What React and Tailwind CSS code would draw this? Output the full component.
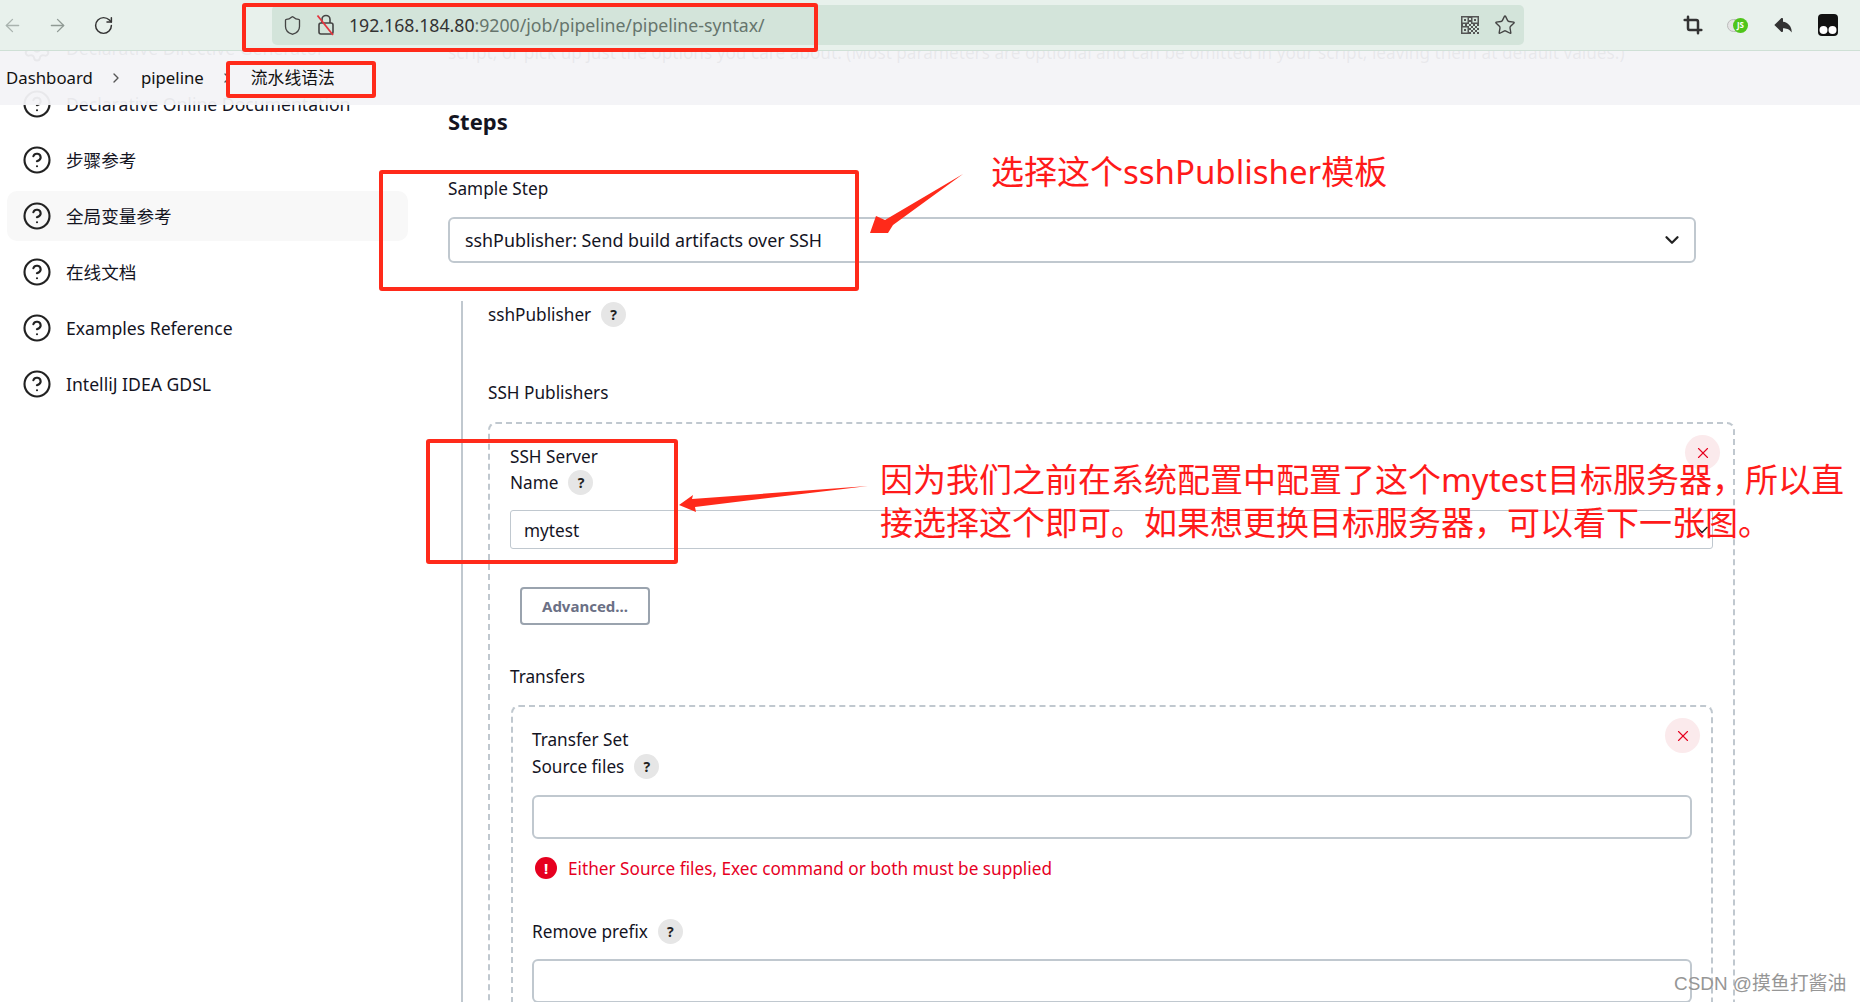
import React from 'react';
import { ArrowLeft, ArrowRight, RotateCw, Shield, Star, Crop, CircleHelp, Settings, ChevronDown, ChevronRight, X } from 'lucide-react';
import { TiArrowBack } from 'react-icons/ti';

const sideItems = [
  { label: 'Declarative Directive Generator', gear: true },
  { label: 'Declarative Online Documentation' },
  { label: '步骤参考' },
  { label: '全局变量参考', active: true },
  { label: '在线文档' },
  { label: 'Examples Reference' },
  { label: 'IntelliJ IDEA GDSL' },
];

// checker cells of the qr icon, on a 9x9 grid
const qrCells = [
  [4, 0], [4, 2], [0, 4], [2, 4], [4, 4], [6, 4], [8, 4], [5, 5], [7, 5], [4, 6], [6, 6], [8, 6], [5, 7], [7, 7], [4, 8], [6, 8], [8, 8],
];

function QrIcon() {
  return (
    <svg width="18" height="18" viewBox="0 0 18 18" className="ml-auto text-[#555]" fill="currentColor">
      <path fillRule="evenodd" d="M0 0h8v8H0zM1.5 1.5v5h5v-5zM10 0h8v8h-8zM11.5 1.5v5h5v-5zM0 10h8v8H0zM1.5 11.5v5h5v-5z" />
      <rect x="3" y="3" width="2" height="2" />
      <rect x="13" y="3" width="2" height="2" />
      <rect x="3" y="13" width="2" height="2" />
      {qrCells.map(([x, y]) => (
        <rect key={`${x}-${y}`} x={x * 2} y={y * 2} width="2" height="2" />
      ))}
    </svg>
  );
}

function Help() {
  return (
    <span className="ml-[10px] inline-flex h-[25px] w-[25px] items-center justify-center rounded-full bg-[#e6e6e6] text-[14px] font-bold text-[#222]">?</span>
  );
}

function Label({ children, help, className = '' }) {
  return (
    <div className={`flex h-[26px] items-center ${className}`}>
      <span className="pt-[2px]">{children}</span>
      {help && <Help />}
    </div>
  );
}

function Toolbar() {
  return (
    <div className="flex h-[51px] items-center border-b border-[#cfe0d6] bg-[#e8f1ec] text-[#444]">
      <ArrowLeft size={21} strokeWidth={1.5} className="ml-[2px] text-[#a9b3ae]" />
      <ArrowRight size={21} strokeWidth={1.5} className="ml-[24px] text-[#8f9a94]" />
      <RotateCw size={21} strokeWidth={1.7} className="ml-[25px] text-[#333]" />
      <div className="ml-[158px] flex h-[40px] w-[1252px] items-center rounded-[5px] bg-[#d3e4da]">
        <Shield size={21} strokeWidth={1.5} className="ml-[10px]" />
        <svg width="20" height="24" viewBox="0 0 20 24" className="ml-[13px]" fill="none">
          <path d="M6 10V6.5a4 4 0 0 1 8 0V10" stroke="#444" strokeWidth="1.6" />
          <rect x="3" y="10" width="14" height="11" rx="2" stroke="#444" strokeWidth="1.6" />
          <path d="M1.5 2.5 17 22" stroke="#e5343f" strokeWidth="1.8" />
        </svg>
        <span className="ml-[13px] text-[17.7px] text-[#66756d]">
          <span className="text-[#333]">192.168.184.80</span>:9200/job/pipeline/pipeline-syntax/
        </span>
        <QrIcon />
        <Star size={22} strokeWidth={1.5} className="ml-[15px] mr-[8px]" />
      </div>
      <Crop size={20} strokeWidth={3} className="ml-[159px] text-[#333]" />
      <div className="relative ml-[24px] h-[13px] w-[20px] rounded-full border border-[#bbb] bg-[#e4e4e4]">
        <span className="absolute -right-[2px] -top-[2px] flex h-[15px] w-[15px] items-center justify-center rounded-full bg-[#4fc51a] text-[8px] font-bold text-white">JS</span>
      </div>
      <TiArrowBack size={26} className="ml-[23px] text-[#333]" />
      <svg width="20" height="22" viewBox="0 0 20 22" className="ml-[22px]">
        <rect width="20" height="22" rx="4" fill="#111" />
        <circle cx="5.5" cy="16" r="4" fill="#fff" />
        <circle cx="14.5" cy="16" r="4" fill="#fff" />
      </svg>
    </div>
  );
}

function Breadcrumb() {
  return (
    <div className="flex h-[54px] items-center bg-[#f3f3f7]/95 pl-[6px] text-[16.8px] text-[#111]">
      <span>Dashboard</span>
      <ChevronRight size={16} className="ml-[15px] text-[#555]" />
      <span className="ml-[17px]">pipeline</span>
      <ChevronRight size={16} className="ml-[15px] text-[#555]" />
      <span className="ml-[16px]">流水线语法</span>
    </div>
  );
}

function Sidebar() {
  return (
    <aside className="flex w-[448px] shrink-0 flex-col gap-[6px] pt-[23px] text-[17.6px]">
      {sideItems.map((item) => (
        <div
          key={item.label}
          className={`ml-[7px] flex h-[50px] w-[401px] items-center gap-[14px] rounded-[10px] pl-[15px] ${item.active ? 'bg-[#f8f8f8]' : ''}`}
        >
          {item.gear ? <Settings size={30} strokeWidth={1.6} className="text-[#222]" /> : <CircleHelp size={30} strokeWidth={1.7} className="text-[#222]" />}
          <span>{item.label}</span>
        </div>
      ))}
    </aside>
  );
}

function StepForm() {
  return (
    <div className="ml-[13px] mt-[38px] border-l-2 border-[#c0c8cf] pl-[25px]">
      <Label help>sshPublisher</Label>
      <Label className="mt-[52px]">SSH Publishers</Label>

      <div className="relative mt-[17px] rounded-[8px] border-2 border-dashed border-[#c0c8cf] px-[20px] pt-[19px]">
        <button className="absolute right-[13px] top-[11px] flex h-[35px] w-[35px] items-center justify-center rounded-full bg-[#fbeaec] text-[#e6001f]">
          <X size={18} strokeWidth={1.5} />
        </button>
        <Label>SSH Server</Label>
        <Label help>Name</Label>
        <div className="mt-[15px] flex h-[39px] items-center justify-between rounded-[3px] border border-[#c0c8cf] pl-[13px]">
          <span className="pt-[2px]">mytest</span>
          <ChevronDown size={20} className="text-[#222]" />
        </div>
        <button className="ml-[10px] mt-[38px] block h-[38px] w-[130px] rounded-[4px] border-2 border-[#9aa3ae] text-[15px] font-bold text-[#6b7085]">Advanced...</button>
        <Label className="mt-[38px]">Transfers</Label>

        <div className="relative ml-px mt-[16px] rounded-[8px] border-2 border-dashed border-[#c0c8cf] px-[19px] pt-[19px] pb-[40px]">
          <button className="absolute right-[11px] top-[11px] flex h-[35px] w-[35px] items-center justify-center rounded-full bg-[#fbeaec] text-[#e6001f]">
            <X size={18} strokeWidth={1.5} />
          </button>
          <Label>Transfer Set</Label>
          <Label help className="mt-px">Source files</Label>
          <div className="mt-[16px] h-[44px] rounded-[6px] border-2 border-[#c0c8cf]" />
          <div className="mt-[16px] flex h-[26px] items-center text-[#e6001f]">
            <span className="ml-[3px] flex h-[22px] w-[22px] items-center justify-center rounded-full bg-[#e6001f] text-[15px] font-bold text-white">!</span>
            <span className="ml-[11px] pt-[2px]">Either Source files, Exec command or both must be supplied</span>
          </div>
          <Label help className="mt-[37px]">Remove prefix</Label>
          <div className="mt-[15px] h-[44px] rounded-[6px] border-2 border-[#c0c8cf]" />
        </div>
      </div>
    </div>
  );
}

function Annotations() {
  return (
    <>
      {/* red boxes drawn over the screenshot */}
      <div className="absolute left-[242px] top-[3px] h-[49px] w-[576px] rounded-[3px] border-4 border-[#ff2a1a]" />
      <div className="absolute left-[226px] top-[61px] h-[37px] w-[150px] rounded-[3px] border-4 border-[#ff2a1a]" />
      <div className="absolute left-[379px] top-[170px] h-[121px] w-[480px] rounded-[3px] border-4 border-[#ff2a1a]" />
      <div className="absolute left-[426px] top-[439px] h-[125px] w-[252px] rounded-[3px] border-4 border-[#ff2a1a]" />

      <svg className="absolute left-0 top-0" width="1860" height="1002" fill="#ff2a1a">
        <polygon points="870,233 876,216 885,220 963,174 893,225 888,233" />
        <polygon points="679,505 693,495 692,499 868,486 695,507 696,512" />
      </svg>

      <div className="absolute left-[991px] top-[148px] text-[33px] leading-[48px] whitespace-nowrap text-[#ff1a1a]">选择这个sshPublisher模板</div>
      <div className="absolute left-[880px] top-[458px] text-[33px] leading-[43px] whitespace-nowrap text-[#ff1a1a]">
        <div>因为我们之前在系统配置中配置了这个mytest目标服务器，所以直</div>
        <div>接选择这个即可。如果想更换目标服务器，可以看下一张图。</div>
      </div>
      <div className="absolute left-[1674px] top-[970px] font-['Liberation_Sans','Noto_Sans_CJK_SC',sans-serif] text-[18.9px] leading-[28px] whitespace-nowrap text-[#969696]">CSDN @摸鱼打酱油</div>
    </>
  );
}

export default function App() {
  return (
    <div className="relative h-screen w-full overflow-hidden bg-white font-['Noto_Sans','Noto_Sans_CJK_SC',sans-serif] text-[17.2px] text-[#14141f]">
      <div className="flex">
        <Sidebar />
        <main className="min-w-0 flex-1 pr-[125px] pt-[40px]">
          <p className="h-[26px] whitespace-nowrap leading-[26px]">script, or pick up just the options you care about. (Most parameters are optional and can be omitted in your script, leaving them at default values.)</p>
          <h2 className="mt-[41px] text-[22px] font-bold leading-[28px]">Steps</h2>
          <Label className="mt-[40px]">Sample Step</Label>
          <div className="mt-[16px] flex h-[46px] w-[1248px] items-center justify-between rounded-[6px] border-2 border-[#c0c8cf] pl-[15px] pr-[11px] text-[17.85px]">
            <span>sshPublisher: Send build artifacts over SSH</span>
            <ChevronDown size={22} strokeWidth={2.5} className="text-[#222]" />
          </div>
          <StepForm />
        </main>
      </div>

      <header className="absolute left-0 right-0 top-0">
        <Toolbar />
        <Breadcrumb />
      </header>

      <Annotations />
    </div>
  );
}
